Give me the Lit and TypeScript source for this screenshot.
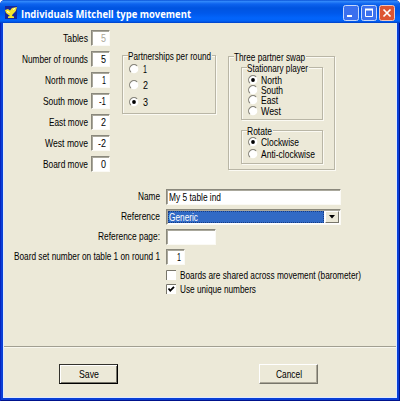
import { LitElement, html, css, svg } from "lit";
import { customElement } from "lit/decorators.js";

// Text set to a fixed width, as the narrow dialog font would take.
const label = (text: string, width: number, cls = "") => html`
  <svg class="txt ${cls}" width=${width} height="14" viewBox="0 0 ${width} 14">
    ${svg`<text x="0" y="11" textLength=${width} lengthAdjust="spacingAndGlyphs">${text}</text>`}
  </svg>`;

const radio = (text: string, width: number, on = false) => html`
  <div class="radio">
    <svg class="dot" width="10" height="10" viewBox="0 0 10 10">
      <circle cx="5" cy="5" r="4.3" fill="#fff" />
      <path d="M1.9 8.1A4.3 4.3 0 0 1 8.1 1.9" fill="none" stroke="#85837a" stroke-width="1.1" />
      ${on ? svg`<circle cx="5" cy="5" r="1.9" fill="#000" />` : ""}
    </svg>
    ${label(text, width)}
  </div>`;

const moves: [string, number, string, number][] = [
  ["Tables", 25, "5", 5],
  ["Number of rounds", 66, "5", 5],
  ["North move", 43, "1", 4],
  ["South move", 45, "-1", 7],
  ["East move", 39, "2", 5],
  ["West move", 43, "-2", 8],
  ["Board move", 45, "0", 5],
];

@customElement("app-root")
export class AppRoot extends LitElement {
  static styles = css`
    :host { display: block; width: 400px; height: 401px; background: #fff; }
    * { box-sizing: border-box; }
    .window {
      width: 400px; height: 401px; display: flex; flex-direction: column;
      background: #0a3fd6; border-radius: 5px 5px 0 0; overflow: hidden;
      font-family: "Liberation Sans Narrow", "Liberation Sans", Arial, sans-serif; font-size: 11px; color: #000;
      padding: 0 3px 3px; box-shadow: inset 1px 0 #0824c0, inset -1px -1px #00138c;
    }
    .titlebar {
      height: 23px; margin: 0 -3px; padding: 4px 5px 0 5px; display: flex; align-items: flex-start;
      background: linear-gradient(#0a52d6 0, #2f86fa 1.5px, #0d63ee 4px, #0054e0 8px, #0058ea 13px, #0264fb 18px, #0262f6 21px, #003fc4 23px);
    }
    .app-icon { margin: 2px 4px 0 0; flex: none; }
    .title { flex: none; margin-top: 3px; }
    .title text { fill: #fff; font-family: "Open Sans", "Noto Sans", sans-serif; font-weight: 700; font-size: 11px; }
    .caption { margin-left: auto; margin-top: 1px; display: flex; gap: 2px; }
    .caption svg { display: block; }
    .client {
      flex: 1; background: #ece9d8; border: 1px solid #dfeaff; border-top: 0;
      display: flex; flex-direction: column;
    }
    .txt { display: block; flex: none; overflow: visible; }
    .txt text { font-size: 11px; }
    .top { display: flex; height: 166px; }
    .moves { width: 106px; padding-top: 7px; display: flex; flex-direction: column; gap: 5px; align-items: flex-end; }
    .row { display: flex; align-items: center; gap: 3px; height: 16px; }
    .field {
      height: 16px; background: #fff; display: flex; align-items: center; flex: none;
      border: 1px solid; border-color: #8a887c #fbfaf5 #fbfaf5 #8a887c;
      box-shadow: inset 1px 1px #aaa89c;
    }
    .num { width: 19px; justify-content: flex-end; padding-right: 3px; }
    .off text { fill: #aca899; }
    .group { border: 1px solid #b9b6a6; box-shadow: 1px 1px #fbfaf3, inset 1px 1px #fbfaf3; display: flex; flex-direction: column; }
    .legend {
      background: linear-gradient(#ece9d8, #ece9d8) 0 6px / 100% 4px no-repeat;
      align-self: flex-start; margin: -7px 0 0 5px; padding: 0 1px 0 0; height: 14px; flex: none;
    }
    .radio { display: flex; align-items: center; gap: 4px; flex: none; }
    .dot { display: block; flex: none; }
    .partners { width: 94px; height: 59px; margin: 32px 0 0 12px; }
    .partners .radio { height: 16.3px; padding-left: 6px; }
    .partners .legend + .radio { margin-top: -2px; }
    .swap { width: 107px; height: 114px; margin: 33px 0 0 12px; }
    .swap .group { width: 82px; margin-left: 12px; flex: none; }
    .swap .radio { gap: 3px; padding-left: 6px; }
    .stationary { height: 53px; margin-top: 3px; }
    .stationary .radio { height: 10.4px; }
    .stationary .legend + .radio { margin-top: -0.6px; }
    .rotate { height: 34px; margin-top: 10px; }
    .rotate .radio { height: 12px; }
    .rotate .legend + .radio { margin-top: -2px; }
    .form { display: grid; grid-template-columns: 156px 1fr; column-gap: 6px; row-gap: 4px; }
    .form .row { height: 16px; }
    .form .end { justify-content: flex-end; }
    .form .end .txt { margin-top: -2px; }
    .wide { width: 175px; padding-left: 2px; }
    .page { width: 50px; }
    .combo { width: 175px; padding: 1px; }
    .picked { flex: 1; height: 12px; background: #316ac5; display: flex; align-items: center; padding-left: 1px; outline: 1px dotted #173c83; outline-offset: -1px; }
    .picked text { fill: #fff; }
    .arrow { width: 14px; height: 12px; background: #ece9d8; border: 1px solid; border-color: #fff #77756a #77756a #fff; display: grid; place-items: center; margin-left: 1px; }
    .checks { display: flex; flex-direction: column; padding: 3px 0 0 162px; }
    .check { display: flex; align-items: center; gap: 4px; height: 14px; }
    .box { display: block; flex: none; }
    .footer { margin-top: auto; height: 51px; border-top: 1px solid #a19f91; box-shadow: inset 0 1px #f8f7ee; display: flex; padding: 17px 0 0 55px; gap: 141px; }
    .btn { width: 59px; height: 20px; background: #ece9d8; display: flex; align-items: center; justify-content: center; border: 1px solid; border-color: #fff #77756a #77756a #fff; box-shadow: inset -1px -1px #aca899; }
    .default { border-color: #33322c #000 #000 #33322c; box-shadow: inset 1px 1px #fff, inset -1px -1px #77756a; }
  `;

  render() {
    return html`
      <div class="window">
        <div class="titlebar">
          <svg class="app-icon" width="12" height="13" viewBox="0 0 12 13">
            <rect width="12" height="13" fill="#1428a0" />
            <path d="M0 4L3 3L5 4.5L7 2L12 1L10.8 5L9 7L7.5 8.5L7 10L9 10.5V12H3V10.5L5 10L3 8.5L1 7Z" fill="#f4e52c" />
            <path d="M2 5.5L4.5 6.5M8 3.5L10 2.5" stroke="#fff" />
          </svg>
          <div class="title">${label("Individuals Mitchell type movement", 170)}</div>
          <div class="caption">
            <svg width="16" height="16" viewBox="0 0 16 16"><rect x=".5" y=".5" width="15" height="15" rx="2" fill="#3b70ee" stroke="#c6d8fb" /><path d="M4 11H9" stroke="#fff" stroke-width="2" /></svg>
            <svg width="16" height="16" viewBox="0 0 16 16"><rect x=".5" y=".5" width="15" height="15" rx="2" fill="#3b70ee" stroke="#c6d8fb" /><path d="M4.5 4V11.5H11.5V4" fill="none" stroke="#fff" /><path d="M4 4.5H12" stroke="#fff" stroke-width="2" /></svg>
            <svg width="16" height="16" viewBox="0 0 16 16"><rect x=".5" y=".5" width="15" height="15" rx="2" fill="#dd5533" stroke="#f3c6bb" /><path d="M4.5 4.5L11.5 11.5M11.5 4.5L4.5 11.5" stroke="#fff" stroke-width="1.7" /></svg>
          </div>
        </div>
        <div class="client">
          <div class="top">
            <div class="moves">
              ${moves.map(([t, w, v, vw], i) => html`
                <div class="row">${label(t, w)}<div class="field num">${label(v, vw, i ? "" : "off")}</div></div>`)}
            </div>
            <div class="group partners">
              <div class="legend">${label("Partnerships per round", 83)}</div>
              ${radio("1", 4)}${radio("2", 5)}${radio("3", 5, true)}
            </div>
            <div class="group swap">
              <div class="legend">${label("Three partner swap", 71)}</div>
              <div class="group stationary">
                <div class="legend">${label("Stationary player", 61)}</div>
                ${radio("North", 21, true)}${radio("South", 22)}${radio("East", 17)}${radio("West", 20)}
              </div>
              <div class="group rotate">
                <div class="legend">${label("Rotate", 25)}</div>
                ${radio("Clockwise", 38, true)}${radio("Anti-clockwise", 54)}
              </div>
            </div>
          </div>
          <div class="form">
            <div class="row end">${label("Name", 22)}</div>
            <div class="row"><div class="field wide">${label("My 5 table ind", 52)}</div></div>
            <div class="row end">${label("Reference", 39)}</div>
            <div class="row"><div class="field combo"><div class="picked">${label("Generic", 29)}</div><div class="arrow"><svg width="6" height="4" viewBox="0 0 6 4"><path d="M0 0H6L3 3.5Z" /></svg></div></div></div>
            <div class="row end">${label("Reference page:", 62)}</div>
            <div class="row"><div class="field page"></div></div>
            <div class="row end">${label("Board set number on table 1 on round 1", 146)}</div>
            <div class="row"><div class="field num">${label("1", 4)}</div></div>
          </div>
          <div class="checks">
            ${[false, true].map((on) => html`
              <div class="check">
                <svg class="box" width="10" height="10" viewBox="0 0 10 10">
                  <rect width="10" height="10" fill="#fff" /><path d="M.5 10V.5H10" fill="none" stroke="#77756a" />
                  ${on ? svg`<path d="M2.5 4.5L4.3 6.7L8 2.8" fill="none" stroke="#000" stroke-width="1.8" />` : ""}
                </svg>
                ${on ? label("Use unique numbers", 76) : label("Boards are shared across movement (barometer)", 181)}
              </div>`)}
          </div>
          <div class="footer">
            <div class="btn default">${label("Save", 20)}</div>
            <div class="btn">${label("Cancel", 26)}</div>
          </div>
        </div>
      </div>`;
  }
}
